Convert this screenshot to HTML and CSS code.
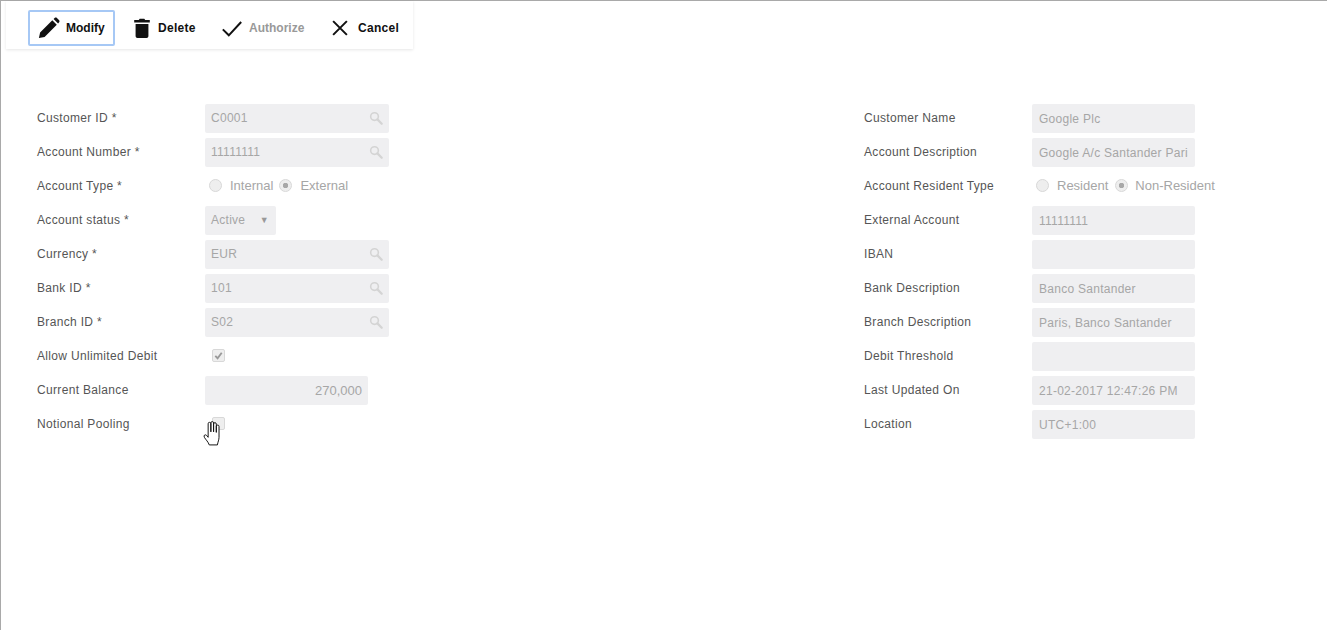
FILE: index.html
```html
<!DOCTYPE html>
<html lang="en">
<head>
<meta charset="utf-8">
<title>Account</title>
<link rel="stylesheet" href="styles.css">
</head>
<body>
<svg class="defs" width="0" height="0" aria-hidden="true">
  <symbol id="search" viewBox="0 0 16 16">
    <circle cx="6.3" cy="6.3" r="4.4" fill="none" stroke="currentColor" stroke-width="1.8"/>
    <path d="M9.6 9.6 14.5 14.5" fill="none" stroke="currentColor" stroke-width="2.6" stroke-linecap="round"/>
  </symbol>
</svg>
<div class="page">
  <div class="toolbar">
    <button class="tool tool-active" type="button">
      <svg class="tool-icon" viewBox="0 0 24 24"><path d="M1 23l1.300-6.200L15.600 3.500l4.900 4.900L7.200 21.700z M17 2.100 18.400.9c.6-.5 1.400-.5 2 0l2.700 2.700c.5.6.5 1.400 0 2L21.900 7z"/></svg>
      <span>Modify</span>
    </button>
    <button class="tool tool-delete" type="button">
      <svg class="tool-icon" viewBox="0 0 24 24"><path d="M3.500 3.300h5l1-1.300h5l1 1.300h5v2.700h-17z M5 7.500h14v13.500a2 2 0 0 1-2 2H7a2 2 0 0 1-2-2z"/></svg>
      <span>Delete</span>
    </button>
    <button class="tool tool-authorize" type="button">
      <svg class="tool-icon" viewBox="0 0 24 24"><path class="stroke" d="M2 13.500 8.500 20 22 5.500"/></svg>
      <span class="muted">Authorize</span>
    </button>
    <button class="tool tool-cancel" type="button">
      <svg class="tool-icon" viewBox="0 0 24 24"><path class="stroke" d="M4.500 4.500 19.500 19.500M19.500 4.500 4.500 19.500"/></svg>
      <span>Cancel</span>
    </button>
  </div>

  <div class="form">
    <div class="col">
      <div class="row"><label>Customer ID *</label><div class="field wide"><span>C0001</span><svg class="search"><use href="#search"/></svg></div></div>
      <div class="row"><label>Account Number *</label><div class="field wide"><span>11111111</span><svg class="search"><use href="#search"/></svg></div></div>
      <div class="row"><label>Account Type *</label><div class="radios radios-left"><i class="radio"></i><span class="opt">Internal</span><i class="radio on"></i><span class="opt">External</span></div></div>
      <div class="row"><label>Account status *</label><div class="field select"><span>Active</span><b class="caret">▼</b></div></div>
      <div class="row"><label>Currency *</label><div class="field wide"><span>EUR</span><svg class="search"><use href="#search"/></svg></div></div>
      <div class="row"><label>Bank ID *</label><div class="field wide"><span>101</span><svg class="search"><use href="#search"/></svg></div></div>
      <div class="row"><label>Branch ID *</label><div class="field wide"><span>S02</span><svg class="search"><use href="#search"/></svg></div></div>
      <div class="row"><label>Allow Unlimited Debit</label><div class="check-wrap"><i class="check"><svg viewBox="0 0 12 12"><path d="M2.500 6.500 5 9 9.500 3"/></svg></i></div></div>
      <div class="row"><label>Current Balance</label><div class="field amount"><span>270,000</span></div></div>
      <div class="row"><label>Notional Pooling</label>
        <div class="check-wrap">
          <i class="check"></i>
          <svg class="cursor" viewBox="0 0 17 23"><path d="M4.500 15V2.500a1.250 1.250 0 0 1 2.500 0V10V1.800a1.250 1.250 0 0 1 2.500 0V10V2.800a1.250 1.250 0 0 1 2.500 0V10.500V5a1.250 1.250 0 0 1 2.500 0V15c0 2.500-1 4-1.500 7H5.500C4.500 19 2.500 17.500 1 15c-1-1.800.8-3 2-1.800z"/></svg>
        </div>
      </div>
    </div>
    <div class="col">
      <div class="row"><label>Customer Name</label><div class="field narrow"><span>Google Plc</span></div></div>
      <div class="row"><label>Account Description</label><div class="field narrow"><span class="clip">Google A/c Santander Paris</span></div></div>
      <div class="row"><label>Account Resident Type</label><div class="radios radios-right"><i class="radio"></i><span class="opt">Resident</span><i class="radio on"></i><span class="opt">Non-Resident</span></div></div>
      <div class="row"><label>External Account</label><div class="field narrow"><span>11111111</span></div></div>
      <div class="row"><label>IBAN</label><div class="field narrow"></div></div>
      <div class="row"><label>Bank Description</label><div class="field narrow"><span>Banco Santander</span></div></div>
      <div class="row"><label>Branch Description</label><div class="field narrow"><span>Paris, Banco Santander</span></div></div>
      <div class="row"><label>Debit Threshold</label><div class="field narrow"></div></div>
      <div class="row"><label>Last Updated On</label><div class="field narrow"><span>21-02-2017 12:47:26 PM</span></div></div>
      <div class="row"><label>Location</label><div class="field narrow"><span>UTC+1:00</span></div></div>
    </div>
  </div>
</div>
</body>
</html>
```
FILE: styles.css
```css
* { box-sizing: border-box; }
html, body { margin: 0; padding: 0; height: 100%; background: #fff; overflow: hidden; }
body { font-family: "Liberation Sans", Arial, sans-serif; font-size: 12px; color: #555; }
.defs { position: absolute; }
.page {
  height: 630px;
  border-top: 1px solid #a9a9a9;
  border-left: 1px solid #a9a9a9;
}
.toolbar {
  display: flex;
  align-items: flex-end;
  width: 407px;
  height: 48px;
  margin-left: 5px;
  padding: 0 0 3px 22px;
  background: #fff;
  box-shadow: 0 1px 3px rgba(0,0,0,.1);
}
.tool {
  display: flex;
  align-items: center;
  height: 36px;
  padding: 0;
  border: 2px solid transparent;
  border-radius: 2px;
  background: transparent;
  font: bold 12px "Liberation Sans", Arial, sans-serif;
  color: #111;
}
.tool-active { width: 87px; padding-left: 8px; border-color: #a6c8f5; }
.tool-delete { width: 97px; padding-left: 14px; letter-spacing: .3px; }
.tool-authorize { width: 110px; padding-left: 7px; }
.tool-cancel { width: 80px; padding-left: 5px; letter-spacing: .3px; }
.tool-icon { width: 22px; height: 22px; fill: #111; flex: none; }
.tool-active .tool-icon { margin-right: 6px; }
.tool-delete .tool-icon { margin-right: 5px; }
.tool-authorize .tool-icon { margin-right: 6px; }
.tool-cancel .tool-icon { margin-right: 7px; }
.stroke { fill: none; stroke: #111; stroke-width: 2.200; }
.muted { color: #999; }
.form {
  display: grid;
  grid-template-columns: 827px 1fr;
  padding: 55px 0 0 36px;
}
.col { display: flex; flex-direction: column; gap: 5px; }
.row { display: flex; align-items: center; height: 29px; }
label { width: 168px; flex: none; color: #555; padding-bottom: 2px; letter-spacing: .33px; }
.field {
  display: flex;
  align-items: center;
  height: 29px;
  background: #efeff1;
  border-radius: 2px;
  color: #a6a6a6;
  white-space: nowrap;
  overflow: hidden;
  letter-spacing: .27px;
}
.wide { width: 184px; padding: 0 6px 2px; justify-content: space-between; }
.narrow { width: 163px; padding: 0 7px; }
.clip { overflow: hidden; }
.amount { width: 163px; padding: 0 6px; justify-content: flex-end; font-size: 13px; letter-spacing: 0; }
.select { width: 71px; padding: 0 6px 2px; justify-content: space-between; }
.caret { font-size: 9px; font-weight: normal; color: #999; padding-right: 1px; }
.search { width: 14px; height: 14px; color: #d4d4d4; }
.radios { display: flex; align-items: center; color: #a6a6a6; white-space: nowrap; font-size: 13px; padding-bottom: 2px; }
.radio {
  display: block;
  width: 13px;
  height: 13px;
  border: 1px solid #d8d8d8;
  border-radius: 50%;
  background: #eee;
}
.radio.on { background: radial-gradient(circle, #a8a8a8 0 2.500px, #eee 3px); }
.radios-left { padding-left: 4px; }
.radios-left .opt:first-of-type { margin: 0 6px 0 8px; }
.radios-left .radio.on + .opt { margin-left: 8px; }
.radios-right { padding-left: 4px; }
.radios-right .opt:first-of-type { margin: 0 7px 0 8px; }
.radios-right .radio.on + .opt { margin-left: 7px; }
.check-wrap { position: relative; padding: 0 0 2px 7px; }
.check {
  display: block;
  width: 13px;
  height: 13px;
  border: 1px solid #d8d8d8;
  border-radius: 2px;
  background: #eee;
}
.check svg { display: block; width: 11px; height: 11px; fill: none; stroke: #999; stroke-width: 2; }
.cursor {
  position: absolute;
  left: -2px;
  top: 4px;
  width: 19px;
  height: 25px;
  fill: #fff;
  stroke: #111;
  stroke-width: .9;
}
```
